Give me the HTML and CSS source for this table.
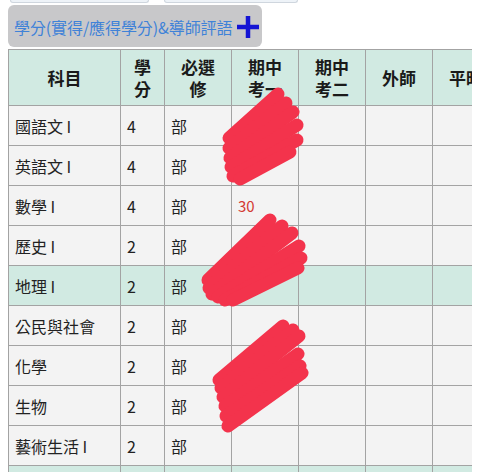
FILE: index.html
```html
<!DOCTYPE html>
<html lang="zh-Hant">
<head>
<meta charset="utf-8">
<link rel="stylesheet" href="styles.css">
</head>
<body>
<div class="page">
  <div class="tabs">
    <div class="tab tab-a"></div>
    <div class="tab tab-b"></div>
  </div>
  <div class="toggle">
    <span class="toggle-text">學分(實得/應得學分)&amp;導師評語</span>
    <svg class="plus" width="24" height="24" viewBox="0 0 24 24"><path d="M12 1v22M1 12h22" stroke="#1414d4" stroke-width="4.5"/></svg>
  </div>
  <div class="table-wrap">
    <table class="grades">
      <colgroup>
        <col class="c-subj"><col class="c-cred"><col class="c-req"><col class="c-m"><col class="c-m"><col class="c-m"><col class="c-m">
      </colgroup>
      <thead>
        <tr><th>科目</th><th>學<br>分</th><th>必選<br>修</th><th>期中<br>考一</th><th>期中<br>考二</th><th>外師</th><th>平時</th></tr>
      </thead>
      <tbody>
        <tr><td>國語文 I</td><td>4</td><td>部</td><td></td><td></td><td></td><td></td></tr>
        <tr><td>英語文 I</td><td>4</td><td>部</td><td></td><td></td><td></td><td></td></tr>
        <tr><td>數學 I</td><td>4</td><td>部</td><td class="score">30</td><td></td><td></td><td></td></tr>
        <tr><td>歷史 I</td><td>2</td><td>部</td><td></td><td></td><td></td><td></td></tr>
        <tr class="alt"><td>地理 I</td><td>2</td><td>部</td><td></td><td></td><td></td><td></td></tr>
        <tr><td>公民與社會</td><td>2</td><td>部</td><td></td><td></td><td></td><td></td></tr>
        <tr><td>化學</td><td>2</td><td>部</td><td></td><td></td><td></td><td></td></tr>
        <tr><td>生物</td><td>2</td><td>部</td><td></td><td></td><td></td><td></td></tr>
        <tr><td>藝術生活 I</td><td>2</td><td>部</td><td></td><td></td><td></td><td></td></tr>
        <tr class="alt"><td>&nbsp;</td><td></td><td></td><td></td><td></td><td></td><td></td></tr>
      </tbody>
    </table>
  </div>
  <svg class="scribbles" width="480" height="472" viewBox="0 0 480 472">
    <g stroke="#f3334c" stroke-width="13" stroke-linecap="round" fill="none">
      <path d="M229 138 L278 94"/>
      <path d="M229 148 L286 103"/>
      <path d="M230 158 L293 112"/>
      <path d="M231 167 L297 125"/>
      <path d="M233 176 L297 140"/>
      <path d="M240 179 L290 152"/>
      <path d="M208 280 L270 220"/>
      <path d="M209 288 L282 226"/>
      <path d="M212 294 L292 233"/>
      <path d="M218 297 L299 246"/>
      <path d="M225 300 L301 258"/>
      <path d="M233 300 L298 268"/>
      <path d="M219 380 L283 326"/>
      <path d="M221 388 L293 330"/>
      <path d="M223 397 L299 336"/>
      <path d="M225 406 L298 354"/>
      <path d="M226 416 L300 366"/>
      <path d="M228 426 L302 373"/>
    </g>
  </svg>
</div>
</body>
</html>
```

FILE: styles.css
```css
html, body {
  margin: 0;
  padding: 0;
  background: #ffffff;
}
.page {
  position: relative;
  width: 480px;
  height: 472px;
  overflow: hidden;
  font-family: "Noto Sans CJK TC", "Noto Sans", sans-serif;
}
.tabs {
  display: flex;
  gap: 15px;
  height: 3px;
  padding-left: 10px;
}
.tab {
  height: 2px;
  background: #eef3f8;
  border: 1px solid #cfd6de;
  border-top: none;
  border-radius: 0 0 6px 6px;
}
.tab-a { width: 137px; }
.tab-b { width: 132px; }
.toggle {
  margin: 2px 0 0 8px;
  width: 254px;
  height: 42px;
  box-sizing: border-box;
  background: #c8c8ca;
  border-radius: 6px;
  display: flex;
  align-items: center;
  padding: 2px 0 0 6px;
  gap: 4px;
}
.toggle-text {
  color: #3f82d8;
  font-size: 16px;
  letter-spacing: -0.1px;
  white-space: nowrap;
}
.plus {
  flex: none;
}
.table-wrap {
  margin: 2px 0 0 8px;
  width: 464px;
  overflow: hidden;
}
.grades {
  border-collapse: collapse;
  table-layout: fixed;
  width: 491px;
  font-size: 16px;
  color: #222;
}
.c-subj { width: 112px; }
.c-cred { width: 44px; }
.c-req { width: 67px; }
.c-m { width: 67px; }
.grades th, .grades td {
  border: 1px solid #a3a3a3;
  padding: 0 6px;
  white-space: nowrap;
  overflow: hidden;
}
.grades th {
  background: #d1eae2;
  height: 55px;
  font-weight: bold;
  text-align: center;
  line-height: 22px;
  font-size: 17px;
  color: #1a1a1a;
}
.grades td {
  background: #f3f3f3;
  height: 39px;
  text-align: left;
}
.grades tr.alt td {
  background: #d1eae2;
}
.grades td.score {
  color: #d33a32;
  font-size: 15px;
}
.scribbles {
  position: absolute;
  left: 0;
  top: 0;
  pointer-events: none;
}
```
